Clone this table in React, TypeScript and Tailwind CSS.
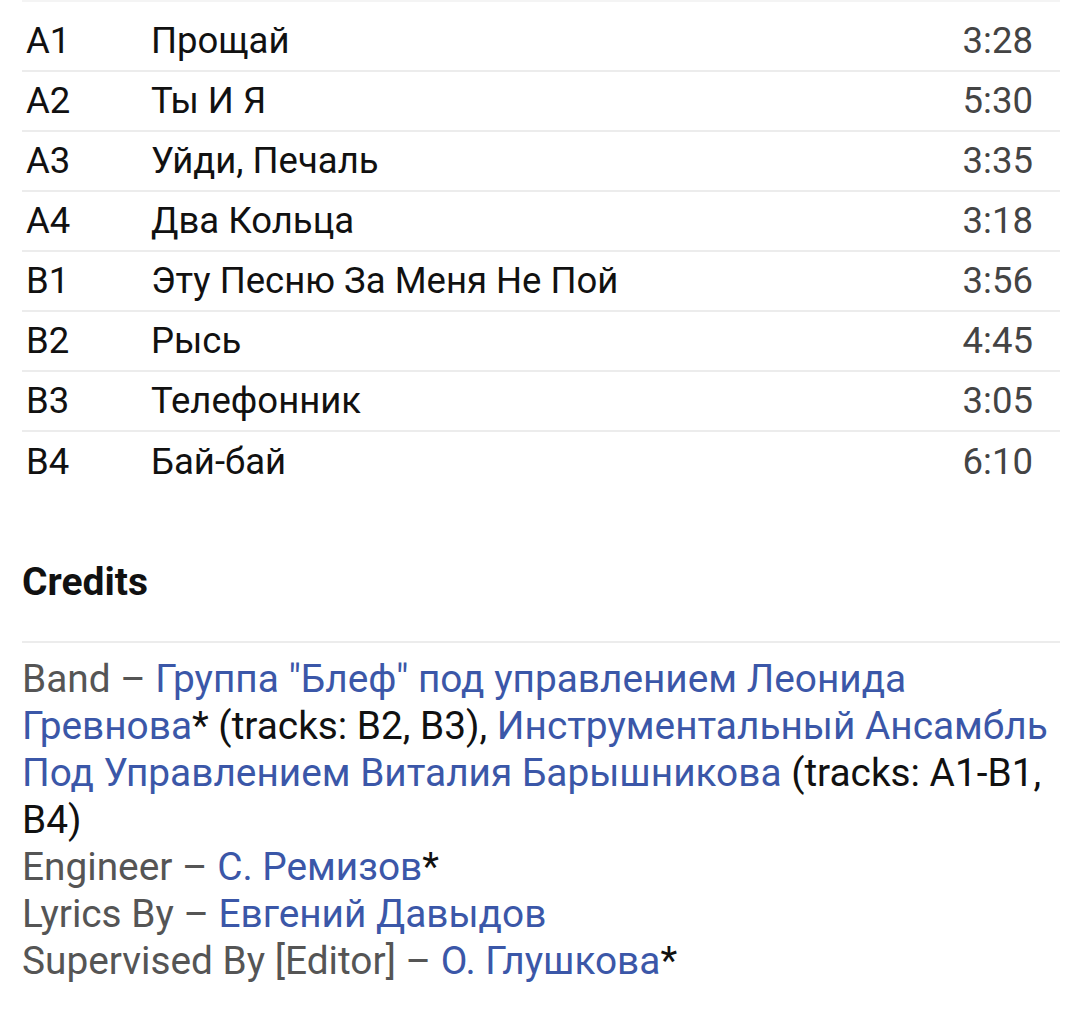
const tracks = [
  { pos: "A1", title: "Прощай", dur: "3:28" },
  { pos: "A2", title: "Ты И Я", dur: "5:30" },
  { pos: "A3", title: "Уйди, Печаль", dur: "3:35" },
  { pos: "A4", title: "Два Кольца", dur: "3:18" },
  { pos: "B1", title: "Эту Песню За Меня Не Пой", dur: "3:56" },
  { pos: "B2", title: "Рысь", dur: "4:45" },
  { pos: "B3", title: "Телефонник", dur: "3:05" },
  { pos: "B4", title: "Бай-бай", dur: "6:10" },
];

const Link = ({ children }: { children: React.ReactNode }) => (
  <a href="#" className="text-[#3b57a8]">{children}</a>
);

export default function App() {
  return (
    <div className="min-h-screen bg-white pl-[22px] pr-[20px] font-['Roboto',sans-serif]">
      <div className="border-t-2 border-[#f4f4f4] pt-[10px] text-[36.5px] text-[#111]">
        {tracks.map((t, i) => (
          <div
            key={t.pos}
            className={
              i < tracks.length - 1
                ? "flex h-[60px] items-center border-b-2 border-[#ececec]"
                : "flex h-[60px] items-center"
            }
          >
            <div className="w-[129px] pl-[4px]">{t.pos}</div>
            <div className="flex-1">{t.title}</div>
            <div className="pr-[27px] text-[#444]">{t.dur}</div>
          </div>
        ))}
      </div>

      <h2 className="mt-[67px] text-[39px] leading-[47px] font-bold text-[#111]">Credits</h2>
      <div className="mt-[35px] border-t-2 border-[#ececec] pt-[12px] text-[38.8px] leading-[47px] text-[#555]">
        <p>
          Band – <Link>Группа "Блеф" под управлением Леонида Гревнова</Link>
          <span className="text-[#111]">* (tracks: B2, B3), </span>
          <Link>Инструментальный Ансамбль Под Управлением Виталия Барышникова</Link>
          <span className="text-[#111]"> (tracks: A1-B1, B4)</span>
        </p>
        <p>
          Engineer – <Link>С. Ремизов</Link>
          <span className="text-[#111]">*</span>
        </p>
        <p>
          Lyrics By – <Link>Евгений Давыдов</Link>
        </p>
        <p>
          Supervised By [Editor] – <Link>О. Глушкова</Link>
          <span className="text-[#111]">*</span>
        </p>
      </div>
    </div>
  );
}
